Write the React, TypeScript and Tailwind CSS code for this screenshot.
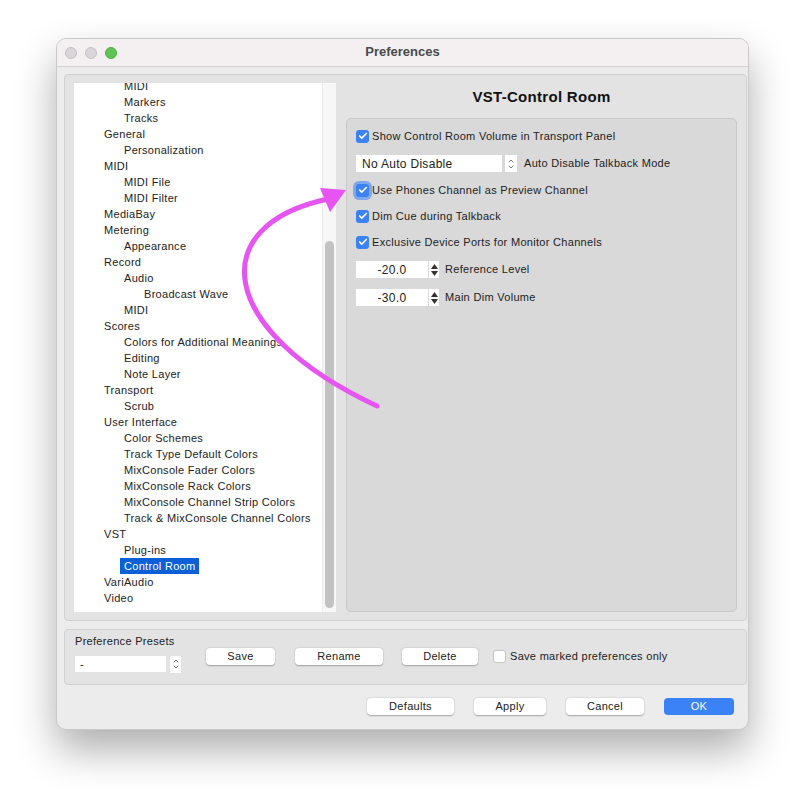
import { Check, ChevronUp, ChevronDown } from "lucide-react";

type Node = { label: string; level: number; selected?: boolean };

const tree: Node[] = [
  { label: "MIDI", level: 1 },
  { label: "Markers", level: 1 },
  { label: "Tracks", level: 1 },
  { label: "General", level: 0 },
  { label: "Personalization", level: 1 },
  { label: "MIDI", level: 0 },
  { label: "MIDI File", level: 1 },
  { label: "MIDI Filter", level: 1 },
  { label: "MediaBay", level: 0 },
  { label: "Metering", level: 0 },
  { label: "Appearance", level: 1 },
  { label: "Record", level: 0 },
  { label: "Audio", level: 1 },
  { label: "Broadcast Wave", level: 2 },
  { label: "MIDI", level: 1 },
  { label: "Scores", level: 0 },
  { label: "Colors for Additional Meanings", level: 1 },
  { label: "Editing", level: 1 },
  { label: "Note Layer", level: 1 },
  { label: "Transport", level: 0 },
  { label: "Scrub", level: 1 },
  { label: "User Interface", level: 0 },
  { label: "Color Schemes", level: 1 },
  { label: "Track Type Default Colors", level: 1 },
  { label: "MixConsole Fader Colors", level: 1 },
  { label: "MixConsole Rack Colors", level: 1 },
  { label: "MixConsole Channel Strip Colors", level: 1 },
  { label: "Track & MixConsole Channel Colors", level: 1 },
  { label: "VST", level: 0 },
  { label: "Plug-ins", level: 1 },
  { label: "Control Room", level: 1, selected: true },
  { label: "VariAudio", level: 0 },
  { label: "Video", level: 0 },
];

const indent = ["pl-[30px]", "pl-[50px]", "pl-[70px]"];

function CheckBox({ checked, focused }: { checked?: boolean; focused?: boolean }) {
  return (
    <span
      className={
        "flex h-[13px] w-[13px] shrink-0 items-center justify-center rounded-[3px] " +
        (checked ? "bg-[#3b82f6]" : "border border-[#c4c4c4] bg-white") +
        (focused ? " ring-[3px] ring-[#7fa8ec]" : "")
      }
    >
      {checked && <Check className="h-[10px] w-[10px] text-white" strokeWidth={4} />}
    </span>
  );
}

function Stepper({ small }: { small?: boolean }) {
  return (
    <span
      className={
        "flex flex-col items-center justify-center bg-white " +
        (small ? "h-[17px] w-[11px]" : "h-[17px] w-[12px]")
      }
    >
      <ChevronUp className="-mb-[2px] h-[8px] w-[8px] text-[#333]" strokeWidth={2} />
      <ChevronDown className="h-[8px] w-[8px] text-[#333]" strokeWidth={2} />
    </span>
  );
}

function NumStepper() {
  return (
    <span className="flex h-[17px] w-[10px] flex-col items-center justify-center gap-[2px]">
      <svg width="7" height="5" viewBox="0 0 7 5">
        <path d="M0 5 L3.5 0 L7 5 Z" fill="#333" />
      </svg>
      <svg width="7" height="5" viewBox="0 0 7 5">
        <path d="M0 0 L3.5 5 L7 0 Z" fill="#333" />
      </svg>
    </span>
  );
}

function CheckRow({ label, focused }: { label: string; focused?: boolean }) {
  return (
    <div className="flex h-[18px] items-center gap-[3px]">
      <CheckBox checked focused={focused} />
      <span>{label}</span>
    </div>
  );
}

function Btn({ label, w, primary }: { label: string; w: string; primary?: boolean }) {
  return (
    <button
      className={
        "flex h-[17px] items-center justify-center rounded-[4px] text-[11px] leading-none " +
        w +
        (primary
          ? " bg-[#3b82f6] text-white"
          : " bg-white text-[#222] shadow-[0_0.5px_1.5px_rgba(0,0,0,0.3)]")
      }
    >
      {label}
    </button>
  );
}

export default function App() {
  return (
    <div
      className="relative h-[804px] w-[804px] overflow-hidden bg-white pl-[56px] pt-[38px] text-[11px] tracking-[0.3px] text-[#222]"
      style={{ fontFamily: '"Liberation Sans", Arial, sans-serif' }}
    >
      <div className="flex h-[692px] w-[693px] flex-col overflow-hidden rounded-[10px] border border-[#c9c9c9] bg-[#ececec] shadow-[0_20px_40px_rgba(0,0,0,0.32)]">
        {/* title bar */}
        <div className="relative flex h-[28px] shrink-0 items-center border-b border-[#d6d2d4] bg-[#f4f0f2] pl-[8px]">
          <div className="flex gap-[8px]">
            <span className="h-[12px] w-[12px] rounded-full border border-[#c3c1c3] bg-[#d8d6d8]" />
            <span className="h-[12px] w-[12px] rounded-full border border-[#c3c1c3] bg-[#d8d6d8]" />
            <span className="h-[12px] w-[12px] rounded-full border border-[#4eae3f] bg-[#5fc454]" />
          </div>
          <div className="absolute inset-x-0 top-0 flex h-[26px] items-center justify-center text-[13px] font-bold tracking-normal text-[#4a4a4a]">
            Preferences
          </div>
        </div>

        <div className="flex flex-1 flex-col pl-[7px] pr-[1px] pt-[7px]">
          {/* main panel */}
          <div className="flex h-[547px] gap-[10px] rounded-[4px] border border-[#d0d0d0] bg-[#e3e3e3] px-[9px] py-[8px]">
            {/* tree */}
            <div className="flex h-full w-[262px] shrink-0 overflow-hidden">
              <div className="h-full w-[248px] overflow-hidden bg-white">
                <div className="-mt-[5px]">
                  {tree.map((n, i) => (
                    <div key={i} className={"flex h-[16px] items-center " + indent[n.level]}>
                      <span
                        className={
                          "flex h-[16px] items-center " +
                          (n.selected ? "-ml-[4px] bg-[#0b5fd7] px-[4px] text-white" : "")
                        }
                      >
                        {n.label}
                      </span>
                    </div>
                  ))}
                </div>
              </div>
              <div className="flex h-full w-[14px] flex-col border-l border-[#ebebeb] bg-[#f7f7f7] px-[2px] pb-[4px] pt-[158px]">
                <div className="flex-1 rounded-full bg-[#c2c2c2]" />
              </div>
            </div>

            {/* right side */}
            <div className="flex flex-1 flex-col">
              <div className="flex h-[35px] items-start justify-center pt-[3px] text-[15px] font-bold tracking-[0.3px] text-[#111]">
                VST-Control Room
              </div>
              <div className="flex flex-1 flex-col rounded-[5px] border border-[#c8c8c8] bg-[#d9d9d9] px-[9px] pt-[8px]">
                <CheckRow label="Show Control Room Volume in Transport Panel" />
                <div className="mt-[10px] flex h-[17px] items-center">
                  <span className="flex h-[17px] w-[146px] items-center bg-white pl-[6px] text-[12px]">
                    No Auto Disable
                  </span>
                  <span className="ml-[3px]">
                    <Stepper />
                  </span>
                  <span className="ml-[7px]">Auto Disable Talkback Mode</span>
                </div>
                <div className="mt-[9px]">
                  <CheckRow label="Use Phones Channel as Preview Channel" focused />
                </div>
                <div className="mt-[8px]">
                  <CheckRow label="Dim Cue during Talkback" />
                </div>
                <div className="mt-[8px]">
                  <CheckRow label="Exclusive Device Ports for Monitor Channels" />
                </div>
                <div className="mt-[10px] flex h-[17px] items-center">
                  <span className="flex h-[17px] w-[72px] items-center justify-center bg-white text-[12px]">
                    -20.0
                  </span>
                  <span className="ml-[1px] bg-white">
                    <NumStepper />
                  </span>
                  <span className="ml-[6px]">Reference Level</span>
                </div>
                <div className="mt-[11px] flex h-[17px] items-center">
                  <span className="flex h-[17px] w-[72px] items-center justify-center bg-white text-[12px]">
                    -30.0
                  </span>
                  <span className="ml-[1px] bg-white">
                    <NumStepper />
                  </span>
                  <span className="ml-[6px]">Main Dim Volume</span>
                </div>
              </div>
            </div>
          </div>

          {/* presets */}
          <div className="mt-[8px] flex h-[56px] flex-col rounded-[4px] border border-[#d0d0d0] bg-[#e3e3e3] pl-[10px] pt-[3px]">
            <div className="text-[11px]">Preference Presets</div>
            <div className="mt-[1px] flex items-start">
              <div className="mt-[5px] flex items-center">
                <span className="flex h-[16px] w-[91px] items-center bg-white pl-[5px]">-</span>
                <span className="ml-[4px]">
                  <Stepper small />
                </span>
              </div>
              <div className="-mt-[3px] ml-[25px] flex items-center">
                <Btn label="Save" w="w-[69px]" />
                <span className="ml-[20px]">
                  <Btn label="Rename" w="w-[88px]" />
                </span>
                <span className="ml-[19px]">
                  <Btn label="Delete" w="w-[76px]" />
                </span>
                <span className="ml-[15px] flex items-center gap-[4px]">
                  <CheckBox />
                  <span>Save marked preferences only</span>
                </span>
              </div>
            </div>
          </div>

          {/* bottom buttons */}
          <div className="mt-[13px] flex justify-end gap-[20px] pr-[13px]">
            <Btn label="Defaults" w="w-[87px]" />
            <Btn label="Apply" w="w-[72px]" />
            <Btn label="Cancel" w="w-[78px]" />
            <Btn label="OK" w="w-[70px]" primary />
          </div>
        </div>
      </div>

      {/* annotation arrow */}
      <svg className="pointer-events-none absolute left-0 top-0" width="804" height="804">
        <path
          d="M377 406 C 215 330, 205 225, 328 199"
          fill="none"
          stroke="#e655f2"
          strokeWidth="5"
          strokeLinecap="round"
        />
        <path d="M346 190 L 320 188 L 330 212 Z" fill="#e655f2" />
      </svg>
    </div>
  );
}
